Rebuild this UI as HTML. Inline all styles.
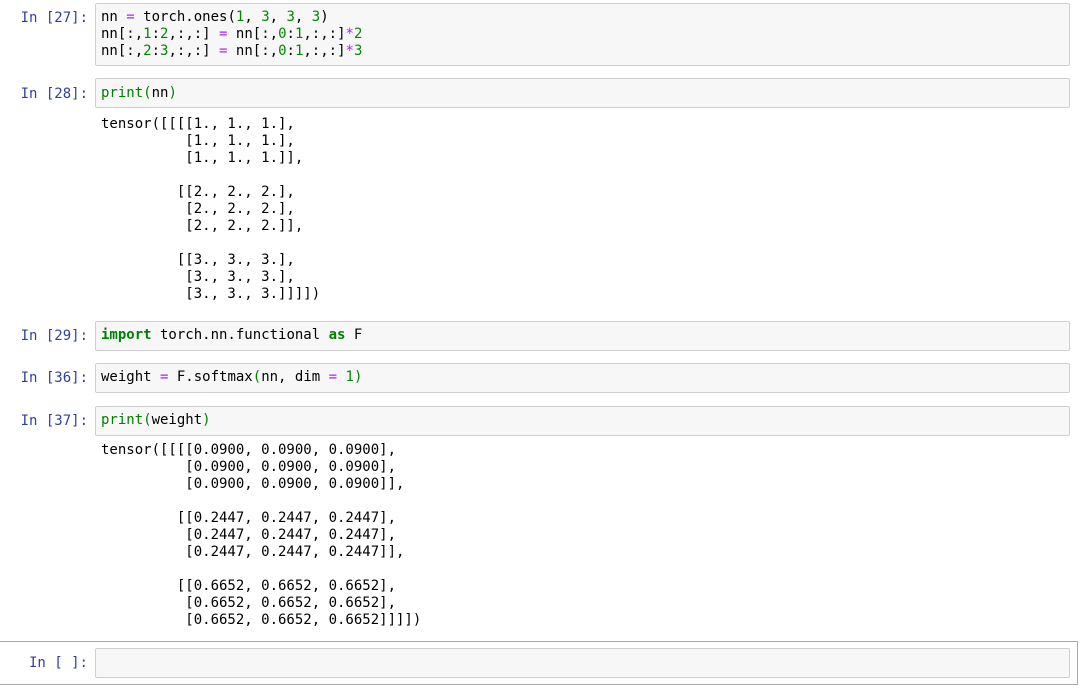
<!DOCTYPE html>
<html><head><meta charset="utf-8"><style>
body{margin:0;width:1086px;height:691px;background:#fff;position:relative;overflow:hidden;font-family:"DejaVu Sans Mono","Liberation Mono",monospace;font-size:14px;color:#000}
.p{position:absolute;right:998px;color:#303f9f;line-height:17px;white-space:pre}
.b{position:absolute;left:95px;width:975px;background:#f7f7f7;border:1px solid #cfcfcf;border-radius:2px;box-sizing:border-box}
.t{position:absolute;left:101px;line-height:17px;white-space:pre}
.n{color:#080}.o{color:#a2f}.k{color:#008000;font-weight:bold}.g{color:#008000}
</style></head><body>
<div class="p" style="top:10px">In [27]:</div>
<div class="b" style="top:3px;height:63px"></div>
<div class="t" style="top:9px">nn <span class="o">=</span> torch.ones(<span class="n">1</span>, <span class="n">3</span>, <span class="n">3</span>, <span class="n">3</span>)
nn[:,<span class="n">1</span>:<span class="n">2</span>,:,:] <span class="o">=</span> nn[:,<span class="n">0</span>:<span class="n">1</span>,:,:]<span class="o">*</span><span class="n">2</span>
nn[:,<span class="n">2</span>:<span class="n">3</span>,:,:] <span class="o">=</span> nn[:,<span class="n">0</span>:<span class="n">1</span>,:,:]<span class="o">*</span><span class="n">3</span></div>

<div class="p" style="top:86px">In [28]:</div>
<div class="b" style="top:78px;height:30px"></div>
<div class="t" style="top:85px"><span class="g">print(</span>nn<span class="g">)</span></div>
<div class="t" style="top:116px">tensor([[[[1., 1., 1.],
          [1., 1., 1.],
          [1., 1., 1.]],

         [[2., 2., 2.],
          [2., 2., 2.],
          [2., 2., 2.]],

         [[3., 3., 3.],
          [3., 3., 3.],
          [3., 3., 3.]]]])</div>

<div class="p" style="top:328px">In [29]:</div>
<div class="b" style="top:321px;height:30px"></div>
<div class="t" style="top:327px"><span class="k">import</span> torch.nn.functional <span class="k">as</span> F</div>

<div class="p" style="top:370px">In [36]:</div>
<div class="b" style="top:363px;height:30px"></div>
<div class="t" style="top:369px">weight <span class="o">=</span> F.softmax<span class="g">(</span>nn, dim <span class="o">=</span> <span class="n">1</span><span class="g">)</span></div>

<div class="p" style="top:413px">In [37]:</div>
<div class="b" style="top:406px;height:30px"></div>
<div class="t" style="top:412px"><span class="g">print(</span>weight<span class="g">)</span></div>
<div class="t" style="top:442px">tensor([[[[0.0900, 0.0900, 0.0900],
          [0.0900, 0.0900, 0.0900],
          [0.0900, 0.0900, 0.0900]],

         [[0.2447, 0.2447, 0.2447],
          [0.2447, 0.2447, 0.2447],
          [0.2447, 0.2447, 0.2447]],

         [[0.6652, 0.6652, 0.6652],
          [0.6652, 0.6652, 0.6652],
          [0.6652, 0.6652, 0.6652]]]])</div>

<div style="position:absolute;left:0;top:641px;width:1078px;height:44px;border:1px solid #ababab;border-left:none;box-sizing:border-box"></div>
<div class="p" style="top:655px">In [ ]:</div>
<div class="b" style="top:648px;height:30px"></div>
</body></html>
